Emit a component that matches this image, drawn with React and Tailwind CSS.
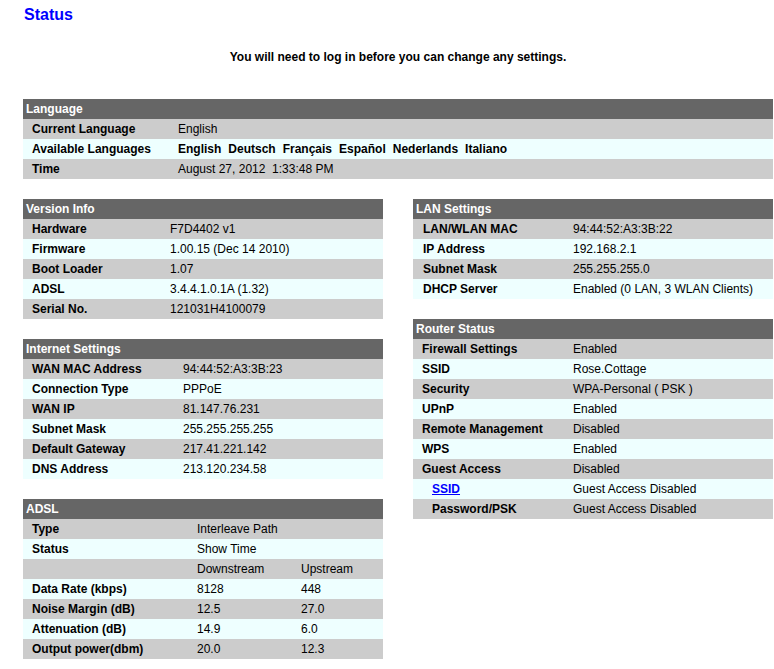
import React from "react";

const GRAY = "bg-[#cccccc]";
const LIGHT = "bg-[#eeffff]";

// rows alternate gray / light starting with gray
const Section = ({ title, children }) => (
  <div className="w-full">
    <div className="h-[20px] bg-[#666666] pl-[3px] text-white font-bold leading-[20px]">{title}</div>
    {children}
  </div>
);

const Row = ({ i, label, value, valueLeft, labelPad = "pl-[9px]", extra, extraLeft }) => (
  <div className={`flex h-[20px] leading-[20px] ${i % 2 === 0 ? GRAY : LIGHT}`}>
    <div className={`shrink-0 font-bold ${labelPad}`} style={{ width: valueLeft }}>
      {label}
    </div>
    <div className="shrink-0 whitespace-pre" style={extraLeft ? { width: extraLeft - valueLeft } : undefined}>
      {value}
    </div>
    {extra !== undefined && <div>{extra}</div>}
  </div>
);

const versionInfo = [
  ["Hardware", "F7D4402 v1"],
  ["Firmware", "1.00.15 (Dec 14 2010)"],
  ["Boot Loader", "1.07"],
  ["ADSL", "3.4.4.1.0.1A (1.32)"],
  ["Serial No.", "121031H4100079"],
];

const internet = [
  ["WAN MAC Address", "94:44:52:A3:3B:23"],
  ["Connection Type", "PPPoE"],
  ["WAN IP", "81.147.76.231"],
  ["Subnet Mask", "255.255.255.255"],
  ["Default Gateway", "217.41.221.142"],
  ["DNS Address", "213.120.234.58"],
];

const adsl = [
  ["Type", "Interleave Path", ""],
  ["Status", "Show Time", ""],
  ["", "Downstream", "Upstream"],
  ["Data Rate (kbps)", "8128", "448"],
  ["Noise Margin (dB)", "12.5", "27.0"],
  ["Attenuation (dB)", "14.9", "6.0"],
  ["Output power(dbm)", "20.0", "12.3"],
];

const lan = [
  ["LAN/WLAN MAC", "94:44:52:A3:3B:22"],
  ["IP Address", "192.168.2.1"],
  ["Subnet Mask", "255.255.255.0"],
  ["DHCP Server", "Enabled (0 LAN, 3 WLAN Clients)"],
];

const router = [
  ["Firewall Settings", "Enabled"],
  ["SSID", "Rose.Cottage"],
  ["Security", "WPA-Personal ( PSK )"],
  ["UPnP", "Enabled"],
  ["Remote Management", "Disabled"],
  ["WPS", "Enabled"],
  ["Guest Access", "Disabled"],
];

const languages = ["English", "Deutsch", "Français", "Español", "Nederlands", "Italiano"];

export default function App() {
  return (
    <div className="min-h-screen bg-white text-black text-[12px] font-['Liberation_Sans',Arial,sans-serif]">
      <div className="ml-[23px] w-[750px] pb-[10px]">
        <h1 className="mt-[5px] h-[20px] pl-[1px] text-[16px] font-bold leading-[20px] text-[#0000ff]">Status</h1>
        <p className="mt-[22px] h-[20px] text-center font-bold leading-[20px]">
          You will need to log in before you can change any settings.
        </p>

        {/* Language */}
        <div className="mt-[32px]">
          <Section title="Language">
            <Row i={0} label="Current Language" value="English" valueLeft={155} />
            <div className={`flex h-[20px] leading-[20px] ${LIGHT}`}>
              <div className="w-[155px] shrink-0 pl-[9px] font-bold">Available Languages</div>
              <div className="flex gap-[7px] font-bold">
                {languages.map((l) => (
                  <span key={l}>{l}</span>
                ))}
              </div>
            </div>
            <Row i={2} label="Time" value="August 27, 2012  1:33:48 PM" valueLeft={155} />
          </Section>
        </div>

        <div className="mt-[20px] grid grid-cols-[360px_360px] gap-x-[30px]">
          {/* left column */}
          <div className="flex flex-col gap-[20px]">
            <Section title="Version Info">
              {versionInfo.map(([l, v], i) => (
                <Row key={l} i={i} label={l} value={v} valueLeft={147} />
              ))}
            </Section>
            <Section title="Internet Settings">
              {internet.map(([l, v], i) => (
                <Row key={l} i={i} label={l} value={v} valueLeft={160} />
              ))}
            </Section>
            <Section title="ADSL">
              {adsl.map(([l, v, e], i) => (
                <Row key={i} i={i} label={l} value={v} valueLeft={174} extra={e} extraLeft={278} />
              ))}
            </Section>
          </div>

          {/* right column */}
          <div className="flex flex-col gap-[20px]">
            <Section title="LAN Settings">
              {lan.map(([l, v], i) => (
                <Row key={l} i={i} label={l} value={v} valueLeft={160} labelPad="pl-[10px]" />
              ))}
            </Section>
            <Section title="Router Status">
              {router.map(([l, v], i) => (
                <Row key={l} i={i} label={l} value={v} valueLeft={160} />
              ))}
              <div className={`flex h-[20px] leading-[20px] ${LIGHT}`}>
                <div className="w-[160px] shrink-0 pl-[19px] font-bold">
                  <a href="#" className="text-[#0000ff] underline">SSID</a>
                </div>
                <div>Guest Access Disabled</div>
              </div>
              <div className={`flex h-[20px] leading-[20px] ${GRAY}`}>
                <div className="w-[160px] shrink-0 pl-[19px] font-bold">Password/PSK</div>
                <div>Guest Access Disabled</div>
              </div>
            </Section>
          </div>
        </div>
      </div>
    </div>
  );
}
